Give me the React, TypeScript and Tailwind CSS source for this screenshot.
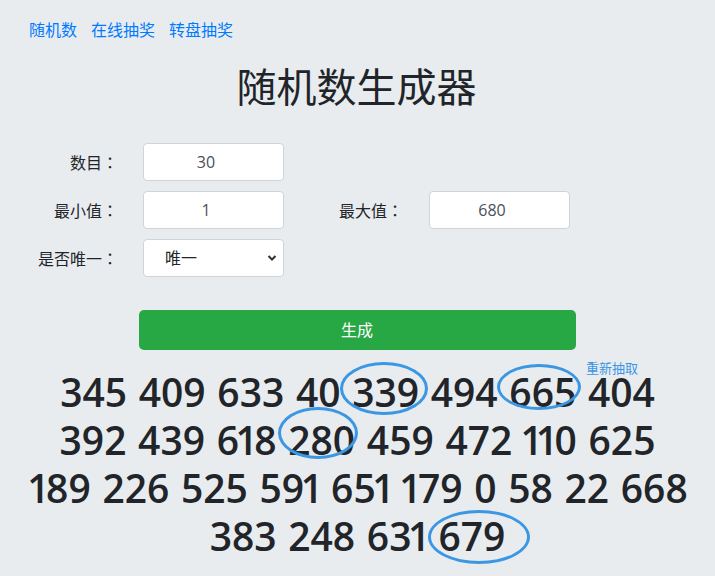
import { useState } from 'react';

type Pick = { value: number; ring?: string };

const rows: Pick[][] = [
  [
    { value: 345 },
    { value: 409 },
    { value: 633 },
    { value: 40 },
    { value: 339, ring: 'left-[-12px] top-[-3px] w-[88px] h-[53px]' },
    { value: 494 },
    { value: 665, ring: 'left-[-12px] top-[-1px] w-[84px] h-[46px]' },
    { value: 404 },
  ],
  [
    { value: 392 },
    { value: 439 },
    { value: 618 },
    { value: 280, ring: 'left-[-10px] top-[-6px] w-[80px] h-[52px]' },
    { value: 459 },
    { value: 472 },
    { value: 110 },
    { value: 625 },
  ],
  [
    { value: 189 },
    { value: 226 },
    { value: 525 },
    { value: 591 },
    { value: 651 },
    { value: 179 },
    { value: 0 },
    { value: 58 },
    { value: 22 },
    { value: 668 },
  ],
  [
    { value: 383 },
    { value: 248 },
    { value: 631 },
    { value: 679, ring: 'left-[-10px] top-[1px] w-[102px] h-[54px]' },
  ],
];

const inputCls =
  'h-[38px] w-[141px] rounded-[4px] border border-[#ced4da] bg-white px-3 text-center text-base text-[#495057] outline-none';

const labelCls = "self-center text-right font-['Noto_Sans_CJK_TC',sans-serif]";

// the "1" in the screenshot's font is narrower than the other digits:
// pull in the char before it and the "1" itself
const tight = (ch: string, next: string | undefined, k: number) => {
  const a = next === '1';
  const b = ch === '1';
  if (a && b) return <span key={k} className="tracking-[-7px]">{ch}</span>;
  if (a || b) return <span key={k} className="tracking-[-3.5px]">{ch}</span>;
  return ch;
};

const Digits = ({ value }: { value: number }) => {
  const s = String(value);
  return <>{s.split('').map((ch, k) => tight(ch, s[k + 1], k))}</>;
};

const App = () => {
  const [count, setCount] = useState('30');
  const [min, setMin] = useState('1');
  const [max, setMax] = useState('680');
  const [unique, setUnique] = useState('1');

  return (
    <div className="min-h-screen bg-[#e9ecef] font-['Open_Sans','Noto_Sans_CJK_SC',sans-serif] text-[#212529]">
      <nav className="flex gap-[14px] pl-[29px] pt-[18px] text-base leading-6 text-[#007bff]">
        <a href="#">随机数</a>
        <a href="#">在线抽奖</a>
        <a href="#">转盘抽奖</a>
      </nav>

      <h1 className="mt-[21px] ml-[-2px] text-center text-[40px] leading-[48px] font-normal">随机数生成器</h1>

      <div className="mt-[32px] grid grid-cols-[118px_141px_94px_141px] gap-x-[25px] gap-y-[10px] text-base">
        <label className={labelCls}>数目：</label>
        <input type="number" className={inputCls} value={count} onChange={(e) => setCount(e.target.value)} />
        <div className="col-span-2" />

        <label className={labelCls}>最小值：</label>
        <input type="number" className={inputCls} value={min} onChange={(e) => setMin(e.target.value)} />
        <label className={labelCls}>最大值：</label>
        <input type="number" className={`${inputCls} ml-px`} value={max} onChange={(e) => setMax(e.target.value)} />

        <label className={labelCls}>是否唯一：</label>
        <div className="relative w-[141px]">
          <select
            className="h-[38px] w-full appearance-none rounded-[4px] border border-[#ced4da] bg-white pl-[21px] text-base text-[#212529] outline-none"
            value={unique}
            onChange={(e) => setUnique(e.target.value)}
          >
            <option value="1">唯一</option>
            <option value="0">不唯一</option>
          </select>
          <svg
            className="pointer-events-none absolute right-[7px] top-[15px] h-[8px] w-[10px]"
            viewBox="0 0 10 8"
            fill="none"
            stroke="#333"
            strokeWidth="2"
          >
            <path d="M1.5 2 L5 5.5 L8.5 2" />
          </svg>
        </div>
      </div>

      <div className="mt-[33px] flex justify-center">
        <button className="ml-[-1px] h-[40px] w-[437px] rounded-[5px] bg-[#28a745] text-base text-white">
          生成
        </button>
      </div>

      <div className="relative mt-[18px]">
        <a href="#" className="absolute left-[586px] top-[-8px] text-[13px] leading-4 text-[#3a95e4]">
          重新抽取
        </a>
        {rows.map((row, i) => (
          <div key={i} className="text-center text-[39px] leading-[48px] font-semibold [word-spacing:1.5px]">
            {row.map((p, j) => (
              <span key={j}>
                {j > 0 && (String(p.value)[0] === '1' ? <span className="tracking-[-3.5px]"> </span> : ' ')}
                <span className="relative">
                  <Digits value={p.value} />
                  {p.ring && (
                    <span className={`absolute rounded-[50%] border-[3px] border-[#3b97e3] ${p.ring}`} />
                  )}
                </span>
              </span>
            ))}
          </div>
        ))}
      </div>
    </div>
  );
};

export default App;
